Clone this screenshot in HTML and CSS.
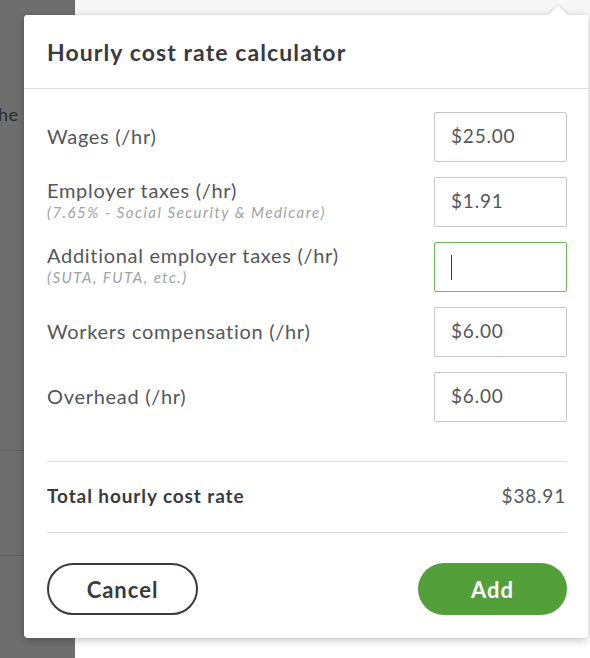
FILE: index.html
```html
<!DOCTYPE html>
<html lang="en">
<head>
    <meta charset="UTF-8">
    <meta name="viewport" content="width=device-width, initial-scale=1.0">
    <title>Hourly cost rate calculator</title>
    <link rel="stylesheet" href="styles.css">
</head>
<body>
    <div class="backdrop">
        <div class="side">
            <span class="side-text">he</span>
            <div class="side-line first"></div>
            <div class="side-line second"></div>
        </div>
        <div class="main">
            <div class="main-top"></div>
        </div>
    </div>

    <!-- Popover dialog -->
    <div class="popover">
        <div class="popover-header">
            <h2>Hourly cost rate calculator</h2>
        </div>

        <div class="popover-body">
            <div class="rows">
                <div class="row">
                    <div class="label">Wages (/hr)</div>
                    <div class="field">$25.00</div>
                </div>
                <div class="row">
                    <div class="label">
                        Employer taxes (/hr)
                        <span class="hint">(7.65% - Social Security &amp; Medicare)</span>
                    </div>
                    <div class="field">$1.91</div>
                </div>
                <div class="row">
                    <div class="label">
                        Additional employer taxes (/hr)
                        <span class="hint">(SUTA, FUTA, etc.)</span>
                    </div>
                    <div class="field focused"><span class="caret"></span></div>
                </div>
                <div class="row">
                    <div class="label">Workers compensation (/hr)</div>
                    <div class="field">$6.00</div>
                </div>
                <div class="row">
                    <div class="label">Overhead (/hr)</div>
                    <div class="field">$6.00</div>
                </div>
            </div>

            <div class="total">
                <span class="total-label">Total hourly cost rate</span>
                <span class="total-value">$38.91</span>
            </div>

            <div class="actions">
                <button class="btn btn-cancel">Cancel</button>
                <button class="btn btn-add">Add</button>
            </div>
        </div>
    </div>
</body>
</html>
```

FILE: styles.css
```css
body {
    font-family: Lato, "Open Sans", sans-serif;
    margin: 0;
    padding: 0;
    width: 590px;
    height: 658px;
    overflow: hidden;
    position: relative;
    color: #393a3d;
}
.backdrop {
    display: flex;
    height: 658px;
}
.side {
    width: 75px;
    background-color: #6e6e6e;
    position: relative;
}
.side-text {
    display: block;
    padding-top: 103px;
    margin-left: -2px;
    font-size: 18px;
    letter-spacing: 0.5px;
    color: #2b2b2b;
}
.side-line {
    position: absolute;
    left: 0;
    right: 0;
    height: 1px;
    background-color: #5f5f5f;
}
.side-line.first {
    top: 450px;
}
.side-line.second {
    top: 555px;
}
.main {
    flex: 1;
    background-color: #fff;
}
.main-top {
    height: 15px;
    background-color: #f6f6f7;
}
.popover {
    position: absolute;
    left: 24px;
    top: 15px;
    width: 564px;
    height: 623px;
    background-color: #fff;
    border-radius: 4px;
    box-shadow: 0 2px 8px rgba(0, 0, 0, 0.25);
}
.popover::before {
    content: "";
    position: absolute;
    top: -7px;
    left: 527px;
    width: 14px;
    height: 14px;
    background-color: #fff;
    transform: rotate(45deg);
    box-shadow: -1px -1px 2px rgba(0, 0, 0, 0.12);
}
.popover-header {
    position: relative;
    height: 73px;
    display: flex;
    align-items: center;
    padding: 0 23px;
    border-bottom: 1px solid #dcdcde;
    background-color: #fff;
    border-radius: 4px 4px 0 0;
}
.popover-header h2 {
    margin: 0;
    font-size: 23px;
    font-weight: bold;
    letter-spacing: 1.1px;
    color: #393a3d;
}
.popover-body {
    padding: 23px 21px 0 23px;
}
.rows {
    display: flex;
    flex-direction: column;
    gap: 15px;
}
.row {
    display: flex;
    justify-content: space-between;
    align-items: center;
    height: 50px;
}
.label {
    font-size: 20px;
    letter-spacing: 0.7px;
    color: #55565a;
    line-height: 1.2;
    padding-bottom: 3px;
}
.hint {
    display: block;
    margin-top: 1px;
    font-size: 15px;
    font-style: italic;
    letter-spacing: 1.5px;
    color: #a0a2a6;
    line-height: 1.3;
}
.field {
    box-sizing: border-box;
    width: 133px;
    height: 50px;
    border: 1px solid #c4c6ca;
    border-radius: 2px;
    padding-left: 16px;
    padding-bottom: 3px;
    display: flex;
    align-items: center;
    font-size: 19px;
    letter-spacing: 0.8px;
    color: #55565a;
}
.field.focused {
    border-color: #6cb955;
    padding-bottom: 0;
}
.caret {
    display: block;
    width: 1px;
    height: 25px;
    background-color: #393a3d;
}
.total {
    box-sizing: border-box;
    margin-top: 39px;
    height: 72px;
    border-top: 1px solid #dcdcde;
    border-bottom: 1px solid #dcdcde;
    display: flex;
    justify-content: space-between;
    align-items: center;
    padding-right: 1px;
    padding-bottom: 3px;
}
.total-label {
    font-size: 19px;
    font-weight: bold;
    letter-spacing: 0.9px;
    color: #393a3d;
}
.total-value {
    font-size: 19px;
    letter-spacing: 0.8px;
    color: #55565a;
}
.actions {
    display: flex;
    justify-content: space-between;
    margin-top: 30px;
}
.btn {
    font-family: Lato, "Open Sans", sans-serif;
    font-size: 22px;
    font-weight: bold;
    letter-spacing: 1px;
    height: 52px;
    border-radius: 26px;
    cursor: pointer;
}
.btn-cancel {
    width: 151px;
    background-color: #fff;
    border: 2px solid #393a3d;
    color: #393a3d;
}
.btn-add {
    width: 149px;
    background-color: #53a03a;
    border: none;
    color: #fff;
}
```
